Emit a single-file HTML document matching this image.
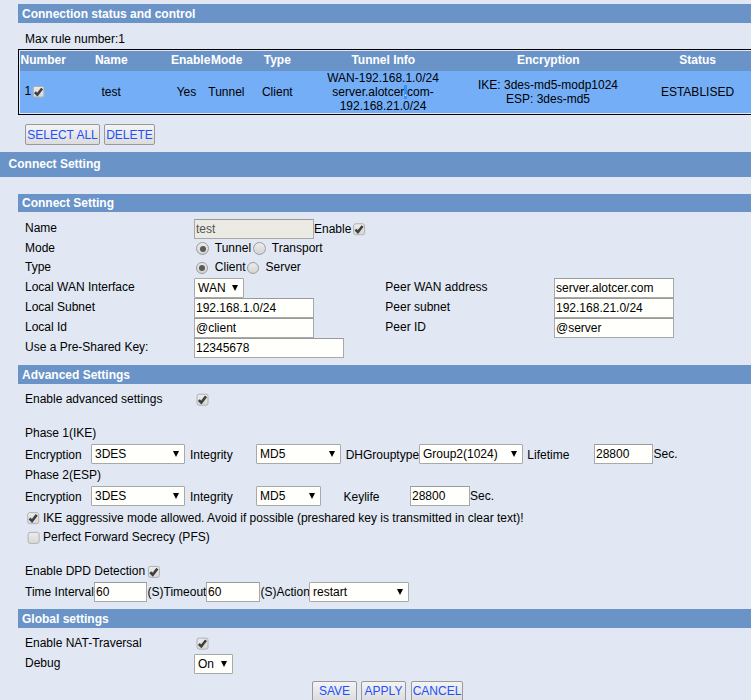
<!DOCTYPE html>
<html><head><meta charset="utf-8"><title>IPSec</title>
<style>
html,body{margin:0;padding:0;overflow:hidden}
body{width:751px;height:700px;overflow:hidden;background:#e1e8f3;position:relative;
 font-family:"Liberation Sans",Arial,sans-serif;font-size:12px;color:#000}
.bar{position:absolute;background:#6a94c8}
.t{position:absolute;white-space:nowrap;line-height:14px;font-size:12px}
.hl{background:#3390ff;color:#fff}
.b{font-weight:bold} .w{color:#fff} .c{text-align:center}
.in{position:absolute;box-sizing:border-box;border:1px solid #a9a9a9;border-top-color:#9a9a9a;background:#fffffb;overflow:hidden}
.in span{position:absolute;left:1px;top:2px;line-height:14px;font-size:12px;white-space:nowrap}
.in.dis{background:#ebebe4} .in.dis span{color:#545454}
.sel{position:absolute;box-sizing:border-box;border:1px solid #a9a9a9;background:#fffffb;border-radius:1px}
.sel span{position:absolute;left:3px;top:2px;line-height:14px;font-size:12px;white-space:nowrap}
.sel i{position:absolute;right:5px;top:6px;width:0;height:0;border-left:3px solid transparent;border-right:3px solid transparent;border-top:6px solid #000}
.chk{position:absolute;left:0;top:0;box-sizing:border-box;width:12px;height:12px;border:1px solid #b0b0b0;border-radius:2.5px;background:linear-gradient(#ececea,#d8d8d6)}
.chk svg{position:absolute;left:-1px;top:-1px}
.rad{position:absolute;box-sizing:border-box;width:13px;height:13px;border:1px solid #9c9c9c;border-radius:50%;background:linear-gradient(#ececea,#d4d4d2)}
.rad b{position:absolute;width:6px;height:6px;border-radius:50%;background:#5a5a5a}
.btn{position:absolute;box-sizing:border-box;border:1px solid #999;border-radius:2px;background:linear-gradient(#f4f4f4,#dcdcdc);color:#2050ff;text-align:center;line-height:21px;font-size:12px;white-space:nowrap}
</style></head>
<body>
<div class="bar" style="left:18px;top:4px;height:19px;width:742px"></div>
<span class="t b w" style="left:22px;top:7px">Connection status and control</span>
<span class="t " style="left:25px;top:32px">Max rule number:1</span>
<div style="position:absolute;left:18px;top:49px;width:760px;height:64px;border:1px solid #000"></div>
<div style="position:absolute;left:20px;top:51px;width:760px;height:20px;background:#6a94c8"></div>
<div style="position:absolute;left:20px;top:71px;width:760px;height:42px;background:#73aef7"></div>
<span class="t b w" style="left:20.5px;top:53px">Number</span>
<span class="t c b w" style="left:11.3px;top:53px;width:200px">Name</span>
<span class="t b w" style="left:171px;top:53px">Enable</span>
<span class="t b w" style="left:211px;top:53px">Mode</span>
<span class="t c b w" style="left:177.3px;top:53px;width:200px">Type</span>
<span class="t c b w" style="left:283.3px;top:53px;width:200px">Tunnel Info</span>
<span class="t c b w" style="left:448.3px;top:53px;width:200px">Encryption</span>
<span class="t c b w" style="left:597.6px;top:53px;width:200px">Status</span>
<span class="t " style="left:24.5px;top:84px">1</span>
<div class="chk" style="transform:translate(32.6px,85.8px)"><svg viewBox="0 0 12 12" width="12" height="12"><path d="M2.3 6.4 L4.8 8.8 L9.5 2.7" fill="none" stroke="#404040" stroke-width="2.6"/></svg></div>
<span class="t c " style="left:11.2px;top:85px;width:200px">test</span>
<span class="t c " style="left:86.5px;top:85px;width:200px">Yes</span>
<span class="t c " style="left:126.4px;top:85px;width:200px">Tunnel</span>
<span class="t c " style="left:177.3px;top:85px;width:200px">Client</span>
<span class="t c " style="left:283px;top:71px;width:200px">WAN-192.168.1.0/24</span>
<span class="t c " style="left:283px;top:85px;width:200px">server.alotcer<span class="hl">.</span>com-</span>
<span class="t c " style="left:283px;top:99px;width:200px">192.168.21.0/24</span>
<span class="t c " style="left:448px;top:78px;width:200px">IKE: 3des-md5-modp1024</span>
<span class="t c " style="left:448px;top:92px;width:200px">ESP: 3des-md5</span>
<span class="t c " style="left:597.5px;top:85px;width:200px">ESTABLISED</span>
<div class="btn" style="left:25px;top:124px;width:75px;height:21px;line-height:21px">SELECT ALL</div>
<div class="btn" style="left:104px;top:124px;width:51px;height:21px;line-height:21px">DELETE</div>
<div class="bar" style="left:0px;top:152px;height:25px;width:760px"></div>
<span class="t b w" style="left:8.6px;top:156.5px">Connect Setting</span>
<div class="bar" style="left:18px;top:194px;height:18px;width:742px"></div>
<span class="t b w" style="left:22px;top:195.5px">Connect Setting</span>
<span class="t " style="left:25px;top:220.5px">Name</span>
<div class="in dis" style="left:194px;top:219px;width:120px;height:20px"><span>test</span></div>
<span class="t " style="left:314px;top:222px">Enable</span>
<div class="chk" style="transform:translate(353.1px,223.25px)"><svg viewBox="0 0 12 12" width="12" height="12"><path d="M2.3 6.4 L4.8 8.8 L9.5 2.7" fill="none" stroke="#404040" stroke-width="2.6"/></svg></div>
<span class="t " style="left:25px;top:240.5px">Mode</span>
<div class="rad" style="left:196px;top:242px;width:13px;height:13px"><b style="left:2.5px;top:2.5px"></b></div>
<span class="t " style="left:214.8px;top:240.6px">Tunnel</span>
<div class="rad" style="left:253px;top:242px;width:13px;height:13px"></div>
<span class="t " style="left:271.8px;top:240.6px">Transport</span>
<span class="t " style="left:25px;top:260px">Type</span>
<div class="rad" style="left:196px;top:262px;width:12px;height:12px"><b style="left:2.0px;top:2.0px"></b></div>
<span class="t " style="left:214.8px;top:260px">Client</span>
<div class="rad" style="left:247px;top:262px;width:12px;height:12px"></div>
<span class="t " style="left:265.5px;top:260px">Server</span>
<span class="t " style="left:25px;top:279.5px">Local WAN Interface</span>
<div class="sel" style="left:194px;top:278px;width:50px;height:20px"><span>WAN</span><i></i></div>
<span class="t " style="left:25px;top:299.5px">Local Subnet</span>
<div class="in " style="left:194px;top:298px;width:120px;height:20px"><span>192.168.1.0/24</span></div>
<span class="t " style="left:25px;top:319.5px">Local Id</span>
<div class="in " style="left:194px;top:318px;width:120px;height:20px"><span>@client</span></div>
<span class="t " style="left:25px;top:339.5px">Use a Pre-Shared Key:</span>
<div class="in " style="left:194px;top:338px;width:150px;height:20px"><span>12345678</span></div>
<span class="t " style="left:385.3px;top:279.5px">Peer WAN address</span>
<div class="in " style="left:554px;top:278px;width:120px;height:20px"><span>server.alotcer.com</span></div>
<span class="t " style="left:385.3px;top:299.5px">Peer subnet</span>
<div class="in " style="left:554px;top:298px;width:120px;height:20px"><span>192.168.21.0/24</span></div>
<span class="t " style="left:385.3px;top:319.5px">Peer ID</span>
<div class="in " style="left:554px;top:318px;width:120px;height:20px"><span>@server</span></div>
<div class="bar" style="left:18px;top:365px;height:19px;width:742px"></div>
<span class="t b w" style="left:22px;top:368px">Advanced Settings</span>
<span class="t " style="left:25px;top:391.5px">Enable advanced settings</span>
<div class="chk" style="transform:translate(196.5px,393.7px)"><svg viewBox="0 0 12 12" width="12" height="12"><path d="M2.3 6.4 L4.8 8.8 L9.5 2.7" fill="none" stroke="#404040" stroke-width="2.6"/></svg></div>
<span class="t " style="left:25px;top:426px">Phase 1(IKE)</span>
<span class="t " style="left:25px;top:447.5px">Encryption</span>
<div class="sel" style="left:91px;top:444px;width:94px;height:20px"><span>3DES</span><i></i></div>
<span class="t " style="left:190px;top:447.5px">Integrity</span>
<div class="sel" style="left:256px;top:444px;width:85px;height:20px"><span>MD5</span><i></i></div>
<span class="t " style="left:345.7px;top:447.5px">DHGrouptype</span>
<div class="sel" style="left:419px;top:444px;width:104px;height:20px"><span>Group2(1024)</span><i></i></div>
<span class="t " style="left:527.3px;top:447.5px">Lifetime</span>
<div class="in " style="left:594px;top:444px;width:59px;height:20px"><span>28800</span></div>
<span class="t " style="left:653.5px;top:446.5px">Sec.</span>
<span class="t " style="left:25px;top:467.5px">Phase 2(ESP)</span>
<span class="t " style="left:25px;top:489.5px">Encryption</span>
<div class="sel" style="left:91px;top:486px;width:94px;height:20px"><span>3DES</span><i></i></div>
<span class="t " style="left:190px;top:489.5px">Integrity</span>
<div class="sel" style="left:256px;top:486px;width:65px;height:20px"><span>MD5</span><i></i></div>
<span class="t " style="left:343.5px;top:489.5px">Keylife</span>
<div class="in " style="left:410px;top:486px;width:60px;height:20px"><span>28800</span></div>
<span class="t " style="left:470px;top:488.5px">Sec.</span>
<div class="chk" style="transform:translate(27.2px,512.15px)"><svg viewBox="0 0 12 12" width="12" height="12"><path d="M2.3 6.4 L4.8 8.8 L9.5 2.7" fill="none" stroke="#404040" stroke-width="2.6"/></svg></div>
<span class="t " style="left:43px;top:511px">IKE aggressive mode allowed. Avoid if possible (preshared key is transmitted in clear text)!</span>
<div class="chk" style="transform:translate(27.65px,531.85px)"></div>
<span class="t " style="left:43px;top:530px">Perfect Forward Secrecy (PFS)</span>
<span class="t " style="left:25px;top:564px">Enable DPD Detection</span>
<div class="chk" style="transform:translate(147.9px,565.9px)"><svg viewBox="0 0 12 12" width="12" height="12"><path d="M2.3 6.4 L4.8 8.8 L9.5 2.7" fill="none" stroke="#404040" stroke-width="2.6"/></svg></div>
<span class="t " style="left:25px;top:585px">Time Interval</span>
<div class="in " style="left:94px;top:582px;width:53px;height:20px"><span>60</span></div>
<span class="t " style="left:147.5px;top:585px">(S)Timeout</span>
<div class="in " style="left:206px;top:582px;width:54px;height:20px"><span>60</span></div>
<span class="t " style="left:260.5px;top:585px">(S)Action</span>
<div class="sel" style="left:309px;top:582px;width:100px;height:20px"><span>restart</span><i></i></div>
<div class="bar" style="left:18px;top:609px;height:19px;width:742px"></div>
<span class="t b w" style="left:22px;top:612px">Global settings</span>
<span class="t " style="left:25px;top:635.5px">Enable NAT-Traversal</span>
<div class="chk" style="transform:translate(196.5px,637.6px)"><svg viewBox="0 0 12 12" width="12" height="12"><path d="M2.3 6.4 L4.8 8.8 L9.5 2.7" fill="none" stroke="#404040" stroke-width="2.6"/></svg></div>
<span class="t " style="left:25px;top:655.5px">Debug</span>
<div class="sel" style="left:194px;top:654px;width:39px;height:20px"><span>On</span><i></i></div>
<div class="btn" style="left:312px;top:681px;width:45px;height:21px;line-height:19px">SAVE</div>
<div class="btn" style="left:361px;top:681px;width:45px;height:21px;line-height:19px">APPLY</div>
<div class="btn" style="left:411px;top:681px;width:52px;height:21px;line-height:19px">CANCEL</div>
</body></html>
